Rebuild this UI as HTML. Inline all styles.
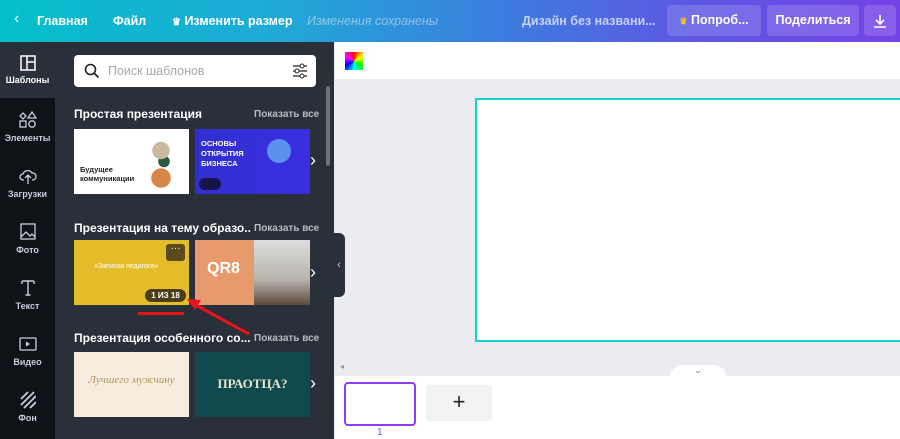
<!DOCTYPE html>
<html><head><meta charset="utf-8"><style>
*{margin:0;padding:0;box-sizing:border-box}
body{width:900px;height:439px;overflow:hidden;font-family:"Liberation Sans","Noto Sans CJK SC",sans-serif;background:#ebecf0;position:relative}
.abs{position:absolute}
.hdr{left:0;top:0;width:900px;height:42px;background:linear-gradient(90deg,#04bfcb 0%,#1faad6 30%,#3b7ede 55%,#5b5ae3 75%,#7542e6 100%)}
.hdr>span{position:absolute;color:#fff;font-weight:bold;font-size:12.5px;top:14px;white-space:nowrap}
.btn{position:absolute;top:5px;height:31px;background:rgba(255,255,255,.15);border-radius:4px;color:#fff;font-weight:bold;font-size:12.5px;line-height:31px;text-align:center;white-space:nowrap}
.side{left:0;top:42px;width:55px;height:397px;background:#0e1318}
.panel{left:55px;top:42px;width:279px;height:397px;background:#293039}
.act{left:0;top:42px;width:55px;height:56px;background:#293039}
.act2{left:0;top:98px;width:55px;height:12px;background:#0e1318;border-top-right-radius:10px}
.si{position:absolute;left:0;width:55px;text-align:center;color:#ccd;font-size:9px;font-weight:bold}
.si svg{display:block;margin:0 auto 4px}
.tt{position:absolute;left:74px;color:#fff;font-weight:bold;font-size:12px;white-space:nowrap}
.sa{position:absolute;left:254px;color:#b8bcc4;font-size:10px;font-weight:bold}
.th{position:absolute;width:115px;height:65px;overflow:hidden}
.chev{position:absolute;left:310px;color:#fff;font-size:18px}
</style></head><body>
<div class="abs hdr">
<span style="left:14px;font-weight:normal;font-size:16px;top:10px">‹</span>
<span style="left:37px">Главная</span>
<span style="left:113px">Файл</span>
<span style="left:172px"><span style="font-size:10px">♛</span> Изменить размер</span>
<span style="left:307px;font-weight:normal;font-style:italic;color:rgba(255,255,255,.45)">Изменения сохранены</span>
<span style="left:522px;color:#c8d3f4">Дизайн без названи...</span>
<div class="btn" style="left:667px;width:94px"><span style="color:#f5c518;font-size:9px">♛</span> Попроб...</div>
<div class="btn" style="left:767px;width:92px">Поделиться</div>
<div class="btn" style="left:864px;width:32px"><svg width="16" height="16" viewBox="0 0 16 16" style="margin-top:8px"><path d="M8 2v9M4 7l4 4 4-4M2 14h12" stroke="#fff" stroke-width="1.6" fill="none"/></svg></div>
</div>
<div class="abs side"></div>
<div class="abs act"></div>
<div class="abs act2"></div>
<div class="abs panel"></div>
<div class="si" style="top:55px;color:#fff"><svg width="16" height="16"><rect x="1" y="1" width="14" height="14" fill="none" stroke="#fff" stroke-width="1.5"/><path d="M7 1v14M7 7h8" stroke="#fff" stroke-width="1.5"/></svg>Шаблоны</div>
<div class="si" style="top:111px"><svg width="18" height="18"><path d="M4 2l3 3-3 3-3-3zM13 1l4 6h-8z" fill="none" stroke="#ccd" stroke-width="1.3"/><rect x="1" y="10" width="6" height="6" fill="none" stroke="#ccd" stroke-width="1.3"/><circle cx="13" cy="13" r="3.2" fill="none" stroke="#ccd" stroke-width="1.3"/></svg>Элементы</div>
<div class="si" style="top:167px"><svg width="18" height="18"><path d="M5 13H4a3 3 0 010-6 5 5 0 019-1 3.5 3.5 0 011 7h-1M9 17V9M6 11l3-3 3 3" fill="none" stroke="#ccd" stroke-width="1.3"/></svg>Загрузки</div>
<div class="si" style="top:223px"><svg width="16" height="18"><rect x="1" y="1" width="14" height="15" fill="none" stroke="#ccd" stroke-width="1.3"/><path d="M1 14l5-5 4 4 2-2 3 3" fill="none" stroke="#ccd" stroke-width="1.3"/></svg>Фото</div>
<div class="si" style="top:279px"><svg width="16" height="18"><path d="M2 2h12M8 2v14M2 2v3M14 2v3M5.5 16h5" stroke="#ccd" stroke-width="1.4" fill="none"/></svg>Текст</div>
<div class="si" style="top:335px"><svg width="18" height="18"><rect x="1" y="3" width="16" height="12" rx="1" fill="none" stroke="#ccd" stroke-width="1.3"/><path d="M7 6.5v5l4-2.5z" fill="#ccd"/></svg>Видео</div>
<div class="si" style="top:391px"><svg width="16" height="18"><path d="M1 8l7-7M1 14L14 1M4 17L16 5M10 17l6-6" stroke="#ccd" stroke-width="1.8"/></svg>Фон</div>
<div class="abs" style="left:74px;top:55px;width:242px;height:32px;background:#fff;border-radius:4px"></div>
<svg class="abs" style="left:84px;top:63px" width="16" height="16"><circle cx="6.5" cy="6.5" r="5" fill="none" stroke="#222" stroke-width="1.6"/><path d="M10 10l4.5 4.5" stroke="#222" stroke-width="1.8"/></svg>
<div class="abs" style="left:108px;top:64px;color:#a6a9ad;font-size:12.5px">Поиск шаблонов</div>
<svg class="abs" style="left:292px;top:62px" width="16" height="18"><path d="M1 4h14M1 9h14M1 14h14" stroke="#222" stroke-width="1.2"/><circle cx="10" cy="4" r="2" fill="#fff" stroke="#222"/><circle cx="5" cy="9" r="2" fill="#fff" stroke="#222"/><circle cx="10" cy="14" r="2" fill="#fff" stroke="#222"/></svg>
<div class="abs" style="left:326px;top:86px;width:4px;height:80px;background:#6b7178;border-radius:2px"></div>
<div class="tt" style="top:107px">Простая презентация</div><div class="sa" style="top:109px">Показать все</div>
<div class="th" style="left:74px;top:129px;background:#fff">
<div style="position:absolute;left:75px;top:5px;width:30px;height:55px;background:radial-gradient(circle at 40% 30%,#c9b9a0 0 20%,transparent 21%),radial-gradient(circle at 50% 50%,#2a5a3a 0 18%,transparent 19%),radial-gradient(circle at 40% 80%,#d7874a 0 20%,transparent 21%)"></div>
<div style="position:absolute;left:6px;top:36px;font-size:7.5px;color:#222;font-weight:bold;line-height:9px">Будущее<br>коммуникации</div></div>
<div class="th" style="left:195px;top:129px;background:linear-gradient(90deg,#2f2fd0,#3a2ee0)">
<div style="position:absolute;left:6px;top:10px;font-size:7.5px;color:#fff;font-weight:bold;line-height:10px">ОСНОВЫ<br>ОТКРЫТИЯ<br>БИЗНЕСА</div>
<div style="position:absolute;left:72px;top:10px;width:24px;height:24px;border-radius:50%;background:#5b8ff0"></div>
<div style="position:absolute;left:4px;top:49px;width:22px;height:12px;border-radius:6px;background:#16164a"></div>
</div>
<div class="chev" style="top:150px">›</div>
<div class="tt" style="top:221px">Презентация на тему образо...</div><div class="sa" style="top:223px;background:#293039;padding-left:3px;left:251px">Показать все</div>
<div class="th" style="left:74px;top:240px;background:#e4bd2a">
<div style="position:absolute;left:20px;top:23px;font-size:7px;color:#fff">«Записки педагога»</div>
<div style="position:absolute;left:92px;top:4px;width:19px;height:17px;background:#5a4a1c;border-radius:3px;color:#fff;font-size:10px;text-align:center;line-height:10px">···</div>
<div style="position:absolute;left:71px;top:49px;width:41px;height:13px;background:#4a3e18;border-radius:7px;color:#fff;font-size:8px;font-weight:bold;text-align:center;line-height:13px">1 ИЗ 18</div></div>
<div class="th" style="left:195px;top:240px;background:#e79a6b">
<div style="position:absolute;left:12px;top:20px;font-size:16px;color:#fff;font-weight:bold">QR8</div>
<div style="position:absolute;left:59px;top:0;width:56px;height:65px;background:linear-gradient(180deg,#ddd,#b9b5ae 60%,#5a4a3a)"></div></div>
<div class="chev" style="top:262px">›</div>
<div class="abs" style="left:138px;top:312px;width:46px;height:3px;background:#e8141c"></div>
<svg class="abs" style="left:180px;top:290px" width="80" height="50"><path d="M69 44L12 13" stroke="#e8141c" stroke-width="3"/><path d="M7 9l14 1-6 10z" fill="#e8141c"/></svg>
<div class="tt" style="top:331px">Презентация особенного со...</div><div class="sa" style="top:333px;background:#293039;padding-left:3px;left:251px">Показать все</div>
<div class="th" style="left:74px;top:352px;background:#f6ece0">
<div style="position:absolute;left:0;width:115px;top:22px;text-align:center;font-family:'Liberation Serif',serif;font-style:italic;color:#b59455;font-size:11px">Лучшего мужчину</div></div>
<div class="th" style="left:195px;top:352px;background:#0f4a4e">
<div style="position:absolute;left:0;width:115px;top:24px;text-align:center;font-family:'Liberation Serif',serif;color:#e9e2cf;font-size:13px;font-weight:bold">ПРАОТЦА?</div></div>
<div class="chev" style="top:373px">›</div>
<div class="abs" style="left:333px;top:233px;width:12px;height:64px;background:#293039;border-radius:0 6px 6px 0;color:#ccd;font-size:11px;line-height:64px;text-align:center">‹</div>
<div class="abs" style="left:335px;top:42px;width:565px;height:37px;background:#fff"></div>
<div class="abs" style="left:345px;top:52px;width:18px;height:18px;background:conic-gradient(red,yellow,lime,cyan,blue,magenta,red)"></div>
<div class="abs" style="left:475px;top:98px;width:430px;height:244px;background:#fff;border:2px solid #13d0d8"></div>
<div class="abs" style="left:335px;top:376px;width:565px;height:63px;background:#fff"></div>
<div class="abs" style="left:670px;top:365px;width:56px;height:14px;background:#fff;border-radius:12px 12px 0 0;color:#777;font-size:9px;text-align:center">⌄</div>
<div class="abs" style="left:340px;top:362px;color:#999;font-size:8px">◂</div>
<div class="abs" style="left:344px;top:382px;width:72px;height:44px;border:2px solid #8b3dff;border-radius:4px;background:#fff"></div>
<div class="abs" style="left:426px;top:385px;width:66px;height:36px;background:#f1f2f4;border-radius:3px;text-align:center;font-size:22px;line-height:34px;color:#222">+</div>
<div class="abs" style="left:377px;top:427px;color:#8b3dff;font-size:10px">1</div>
</body></html>
